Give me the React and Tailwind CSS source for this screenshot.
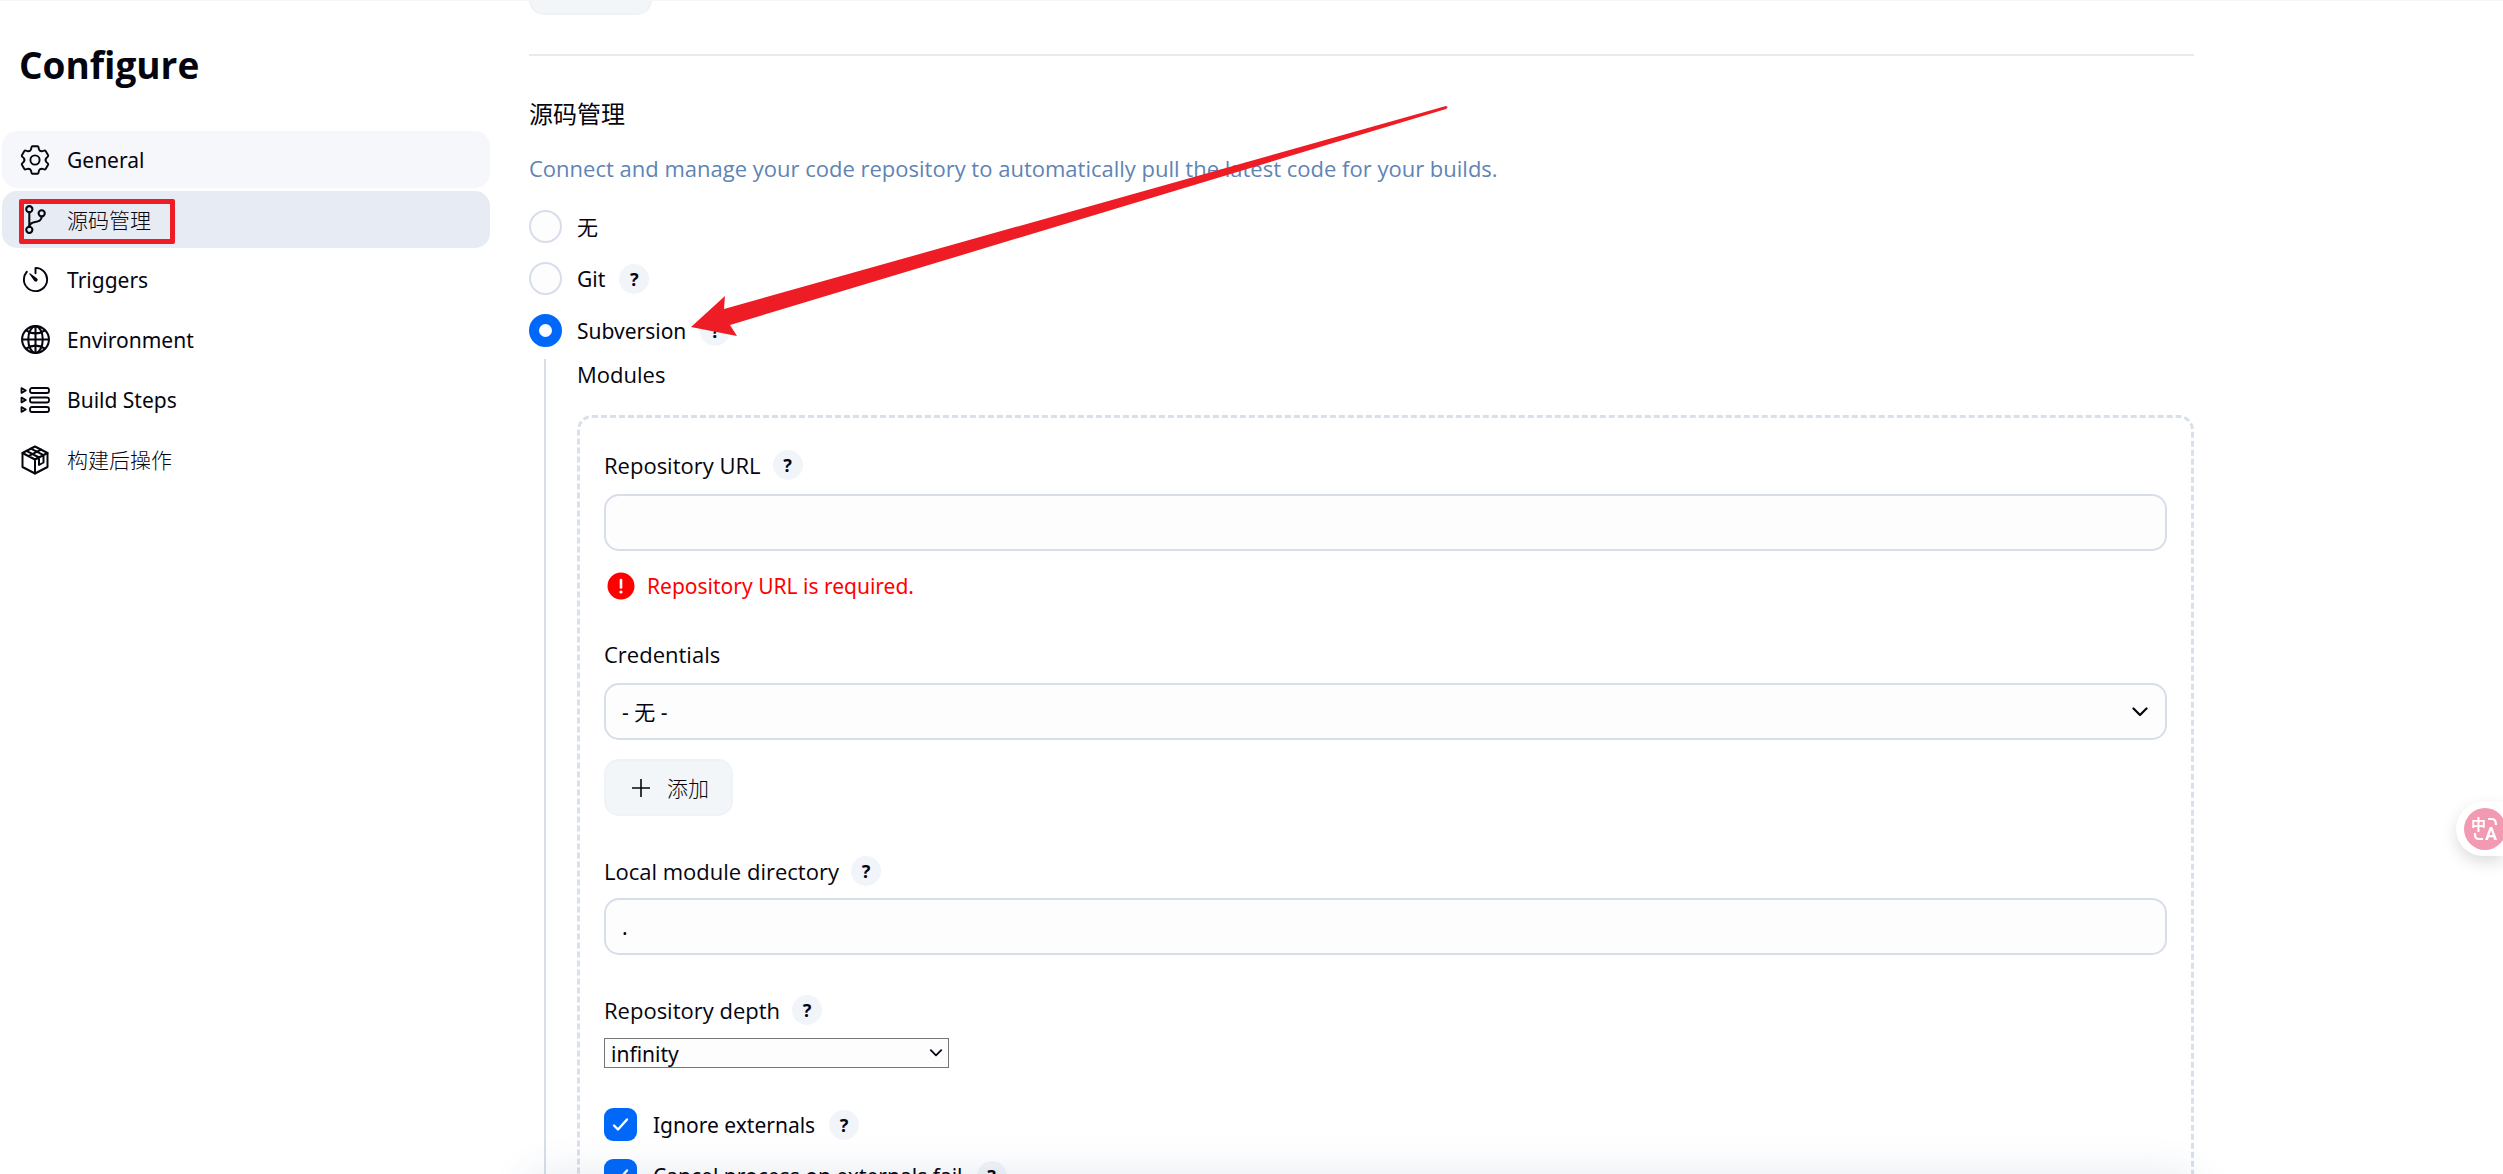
import { IoGitBranchOutline, IoTimerOutline, IoGlobeOutline } from 'react-icons/io5';

const inputClass = 'w-full h-[57px] rounded-[15px] border-2 border-[#d7deea] bg-[#fdfdfe] px-4 outline-none';
const labelFont = "font-['Open_Sans','Noto_Sans_CJK_SC',sans-serif] text-[22px]";

function GearIcon() {
    return (
        <svg viewBox="-15 -15 30 30" className="size-[30px]" fill="none" stroke="currentColor" strokeWidth="1.9" strokeLinecap="round" strokeLinejoin="round">
            {[0, 60, 120, 180, 240, 300].map((angle) => (
                <path
                    key={angle}
                    transform={`rotate(${angle})`}
                    d="M-5.3 -9.2Q-4.2 -9.6 -3.9 -10.9L-3.5 -12.8Q-3.3 -13.7 -2.5 -13.7H2.5Q3.3 -13.7 3.5 -12.8L3.9 -10.9Q4.2 -9.6 5.3 -9.2"
                />
            ))}
            <circle r="4.6" />
        </svg>
    );
}

function StepsIcon() {
    return (
        <svg viewBox="0 0 30 30" className="size-[30px]" fill="none" stroke="currentColor" strokeWidth="1.8" strokeLinejoin="round">
            {[5.5, 15, 24.5].map((y) => (
                <g key={y}>
                    <path d={`M1.5 ${y - 2.4}L5.8 ${y}L1.5 ${y + 2.4}Z`} />
                    <rect x="10" y={y - 2.5} width="19" height="5" rx="2" />
                </g>
            ))}
        </svg>
    );
}

function PackageIcon() {
    return (
        <svg viewBox="0 0 30 30" className="size-[30px]" fill="none" stroke="currentColor" strokeWidth="2" strokeLinejoin="round" strokeLinecap="round">
            <path d="M15 1.5L27.5 8V22L15 28.5L2.5 22V8Z" />
            <path d="M2.5 8L15 14.5L27.5 8M15 14.5V28.5M6.5 5.8L19 12.5V20L23.5 17.5V10.2L11 3.6M8.5 11.2L21 4.6" />
        </svg>
    );
}

function Chevron({ className }) {
    return (
        <svg viewBox="0 0 16 10" className={className} fill="none" stroke="#05050f" strokeWidth="2.2" strokeLinecap="round" strokeLinejoin="round">
            <path d="M1.5 1.5L8 8L14.5 1.5" />
        </svg>
    );
}

function Help({ topic }) {
    return (
        <button aria-label={`Help for ${topic}`} className="flex size-[30px] shrink-0 items-center justify-center rounded-full bg-[#f1f5f9] font-['Noto_Sans'] text-[18px] font-bold">
            ?
        </button>
    );
}

function FieldLabel({ id, help, children }) {
    return (
        <div className="flex h-[30px] items-center gap-3">
            <label htmlFor={id} className={labelFont}>{children}</label>
            {help && <Help topic={children} />}
        </div>
    );
}

function RadioRow({ id, label, checked, help }) {
    return (
        <div className="flex h-[33px] items-center gap-[14px]">
            <label htmlFor={id} className="flex items-center gap-[15px]">
                <input
                    id={id}
                    type="radio"
                    name="scm"
                    defaultChecked={checked}
                    className="size-[33px] appearance-none rounded-full border-2 border-[#d7deea] bg-[#fdfdfe] checked:border-[10px] checked:border-[#0068f8]"
                />
                {label}
            </label>
            {help && <Help topic={label} />}
        </div>
    );
}

function CheckRow({ id, label }) {
    return (
        <div className="flex h-[33px] items-center gap-[14px]">
            <label htmlFor={id} className="flex items-center gap-4">
                <span className="grid">
                    <input id={id} type="checkbox" defaultChecked className="peer col-start-1 row-start-1 size-[33px] appearance-none rounded-[9px] border-2 border-[#d7deea] checked:border-0 checked:bg-[#0068f8]" />
                    <svg viewBox="0 0 33 33" className="pointer-events-none col-start-1 row-start-1 hidden size-[33px] peer-checked:block" fill="none" stroke="white" strokeWidth="2.4" strokeLinecap="round" strokeLinejoin="round">
                        <path d="M10 17.5L14 21.5L23 11.5" />
                    </svg>
                </span>
                {label}
            </label>
            <Help topic={label} />
        </div>
    );
}

const navItems = [
    { label: 'General', icon: <GearIcon />, bg: 'bg-[#f5f7fb]' },
    { label: '源码管理', icon: <IoGitBranchOutline className="size-[33px]" />, bg: 'bg-[#e7ebf4] font-light', marked: true },
    { label: 'Triggers', icon: <IoTimerOutline className="size-[31px]" /> },
    { label: 'Environment', icon: <IoGlobeOutline className="size-[33px]" /> },
    { label: 'Build Steps', icon: <StepsIcon /> },
    { label: '构建后操作', icon: <PackageIcon />, bg: 'font-light' },
];

function Sidebar() {
    return (
        <aside className="w-[490px] shrink-0 pl-0.5 pt-9">
            <h1 className="pl-[17px] font-['Open_Sans'] text-[37px] leading-[56px] font-bold">Configure</h1>
            <nav className="mt-[38px] flex flex-col gap-[3px]">
                {navItems.map((item) => (
                    <a key={item.label} href="#" className={`relative flex h-[57px] items-center gap-[15px] rounded-[15px] pl-4 ${item.bg || ''}`}>
                        <span className="flex size-[34px] items-center justify-center">{item.icon}</span>
                        {item.label}
                        {item.marked && <span className="absolute top-2 left-[17px] h-[45px] w-[156px] rounded-[2px] border-5 border-[#ee1c24]" />}
                    </a>
                ))}
            </nav>
        </aside>
    );
}

function ModuleForm() {
    return (
        <div className="rounded-[15px] border-3 border-dashed border-[#d8e0ea] px-6 pt-8 pb-10">
            <FieldLabel id="url" help>Repository URL</FieldLabel>
            <input id="url" type="text" className={`mt-[14px] ${inputClass}`} />
            <div className="mt-5 flex h-[30px] items-center gap-3 pl-[3px] text-[#ff0000]">
                <svg viewBox="0 0 28 28" className="size-7">
                    <circle cx="14" cy="14" r="13.5" fill="#ff0000" />
                    <path d="M14 8V15.5" stroke="white" strokeWidth="2.6" strokeLinecap="round" />
                    <circle cx="14" cy="20" r="1.6" fill="white" />
                </svg>
                Repository URL is required.
            </div>

            <div className="mt-[38px]">
                <FieldLabel id="credentials">Credentials</FieldLabel>
                <div className="mt-[14px] grid items-center">
                    <select id="credentials" className={`col-start-1 row-start-1 appearance-none ${inputClass}`}>
                        <option>- 无 -</option>
                    </select>
                    <Chevron className="pointer-events-none col-start-1 row-start-1 mr-[19px] h-2.5 w-4 justify-self-end" />
                </div>
                <button className="mt-[19px] flex h-[57px] items-center gap-4 rounded-[15px] border-2 border-[#eff2f6] bg-[#f2f6f9] pr-[22px] pl-[25px] font-light">
                    <svg viewBox="0 0 20 20" className="size-5" stroke="currentColor" strokeWidth="1.6">
                        <path d="M10 1V19M1 10H19" />
                    </svg>
                    添加
                </button>
            </div>

            <div className="mt-10">
                <FieldLabel id="local" help>Local module directory</FieldLabel>
                <input id="local" type="text" defaultValue="." className={`mt-3 ${inputClass}`} />
            </div>

            <div className="mt-10">
                <FieldLabel id="depth" help>Repository depth</FieldLabel>
                <div className="mt-[13px] grid w-[345px] items-center">
                    <select id="depth" className="col-start-1 row-start-1 h-[30px] appearance-none border border-[#767676] bg-[#fdfdfe] px-1.5">
                        <option>infinity</option>
                    </select>
                    <Chevron className="pointer-events-none col-start-1 row-start-1 mr-1.5 h-2 w-[14px] justify-self-end" />
                </div>
            </div>

            <div className="mt-10 flex flex-col gap-[18px]">
                <CheckRow id="ignore" label="Ignore externals" />
                <CheckRow id="cancel" label="Cancel process on externals fail" />
            </div>
        </div>
    );
}

function Arrow() {
    return (
        <svg viewBox="0 0 757 231" className="pointer-events-none absolute top-[104px] left-[162px] h-[231px] w-[757px]" fill="#ee1c24">
            <path d="M0 222L34 191L33 204L755 1Q758 2 755 4L39 220L46 231Z" />
        </svg>
    );
}

function TranslateWidget() {
    return (
        <button aria-label="Translate" className="fixed top-[802px] right-0 flex h-[54px] w-[47px] items-center rounded-l-full bg-white pl-2 shadow-[0_6px_16px_rgba(0,0,0,0.14)]">
            <svg viewBox="0 0 42 42" className="size-[42px] shrink-0" fill="none" stroke="white" strokeWidth="2.2">
                <circle cx="21" cy="21" r="21" fill="#f29ab1" stroke="none" />
                <path d="M24 11H28Q32 11 32 17M11 25V27Q11 31 15 31H19" />
                <text x="7" y="22" fill="white" stroke="none" className="font-['Noto_Sans_CJK_SC'] text-[15px] font-bold">中</text>
                <text x="21" y="32" fill="white" stroke="none" className="font-['Roboto'] text-[18px] font-bold">A</text>
            </svg>
        </button>
    );
}

export default function App() {
    return (
        <div className="flex h-screen gap-[39px] overflow-hidden border-t border-[#f6f6f8] bg-white font-['Noto_Sans','Noto_Sans_CJK_SC',sans-serif] text-[21px] leading-[30px] text-[#05050f]">
            <Sidebar />
            <main className="relative mr-10 h-full max-w-[1665px] flex-1">
                <button aria-label="Advanced" className="-mt-[43px] block h-[57px] w-[123px] rounded-[15px] border-2 border-[#eff2f6] bg-[#f2f6f9]" />
                <hr className="mt-[39px] border-t-2 border-[#e6ebf0]" />
                <h2 className="mt-[43px] text-[24px]">源码管理</h2>
                <p className={`mt-6 text-[#5f84b4] ${labelFont}`}>Connect and manage your code repository to automatically pull the latest code for your builds.</p>
                <div className="mt-[27px] flex flex-col gap-[19px]">
                    <RadioRow id="none" label="无" />
                    <RadioRow id="git" label="Git" help />
                    <RadioRow id="svn" label="Subversion" help checked />
                </div>
                <div className="mt-3 ml-[15px] border-l-2 border-[#d7deea] pl-[31px]">
                    <div className={`mb-[26px] ${labelFont}`}>Modules</div>
                    <ModuleForm />
                </div>
                <Arrow />
                <div className="pointer-events-none absolute inset-x-0 top-full h-16 rounded-[15px] shadow-[0_0_40px_rgba(40,70,120,0.12)]" />
            </main>
            <TranslateWidget />
        </div>
    );
}
